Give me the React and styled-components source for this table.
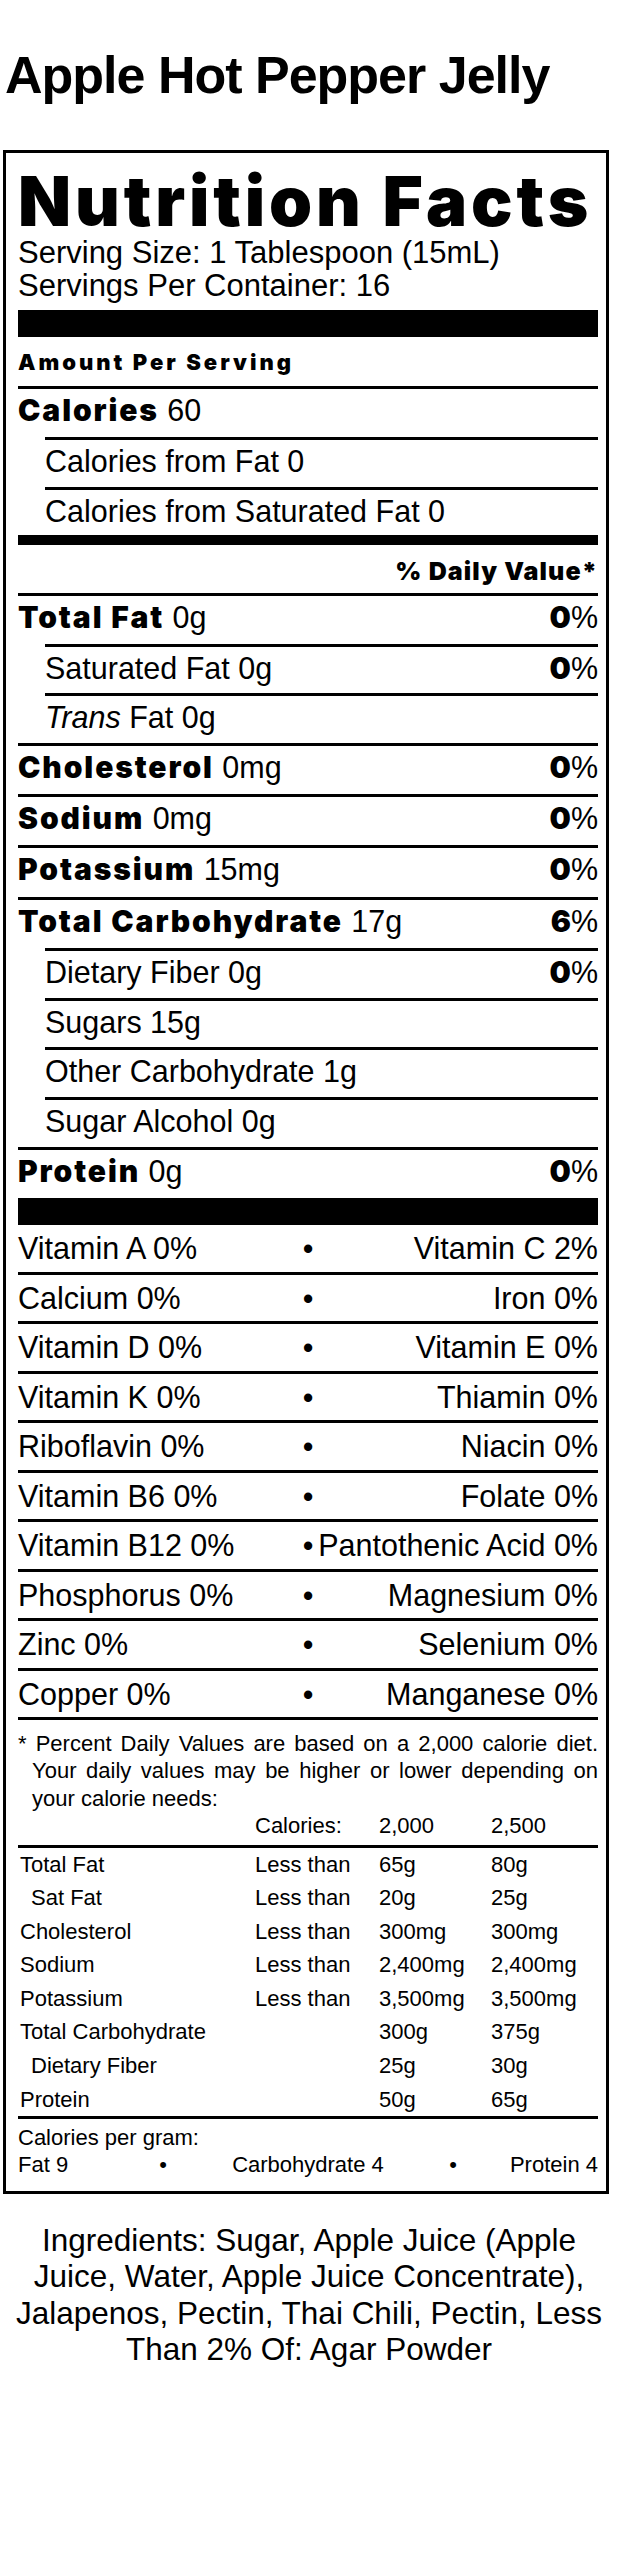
import React from 'react';
import styled, { createGlobalStyle } from 'styled-components';

const Global = createGlobalStyle`
  html, body { margin: 0; padding: 0; background: #fff; }
  body {
    font-family: "Liberation Sans", Arial, Helvetica, sans-serif;
    color: #000;
  }
`;

const heavy = `
  font-family: Inter, Roboto, "Liberation Sans", sans-serif;
  font-weight: 900;
`;

const Page = styled.div`
  width: 618px;
  min-height: 2560px;
  padding-top: 45px;
  box-sizing: border-box;
`;

const Title = styled.h1`
  margin: 0 0 0 5px;
  font-size: 52px;
  font-weight: 700;
  letter-spacing: -1px;
  line-height: 60px;
  white-space: nowrap;
`;

const Label = styled.section`
  box-sizing: border-box;
  width: 606px;
  margin: 45px 0 0 3px;
  border: 3px solid #000;
  padding: 0 8px 13px 12px;
`;

const Heading = styled.h2`
  ${heavy}
  margin: 15px 0 0;
  font-size: 69px;
  line-height: 67px;
  letter-spacing: 3.9px;
  white-space: nowrap;
`;

const Serving = styled.div`
  margin-top: 1px;
  font-size: 31px;
  line-height: 33px;
  white-space: nowrap;
`;

const Bar = styled.div`
  height: 27px;
  background: #000;
  margin-top: ${p => p.$mt || 0}px;
`;

const Amount = styled.div`
  ${heavy}
  font-size: 22px;
  letter-spacing: 3px;
  height: 47px;
  line-height: 47px;
  padding-top: 2px;
  white-space: nowrap;
`;

const Row = styled.div`
  display: flex;
  align-items: baseline;
  justify-content: space-between;
  border-top: 3px solid #000;
  margin-left: ${p => (p.$indent ? 27 : 0)}px;
  height: ${p => p.$h || 47.5}px;
  font-size: 30.5px;
  line-height: 43px;
  white-space: nowrap;
`;

const DVRow = styled.div`
  ${heavy}
  display: flex;
  justify-content: flex-end;
  border-top: 10px solid #000;
  height: 43px;
  padding-top: 5px;
  font-size: 25px;
  letter-spacing: 1.1px;
  line-height: 43px;
  white-space: nowrap;
`;

const Name = styled.span`
  ${heavy}
  font-size: 30px;
  letter-spacing: 1.9px;
`;

const Pct = styled.span`
  white-space: nowrap;
`;

const PctNum = styled.span`
  ${heavy}
  font-size: 30px;
`;

const Ital = styled.i`
  font-style: italic;
`;

const VitRow = styled.div`
  display: grid;
  grid-template-columns: 1fr auto 1fr;
  align-items: baseline;
  border-bottom: 3px solid #000;
  height: 46.5px;
  font-size: 30.5px;
  line-height: 46.5px;
  white-space: nowrap;
`;

const Right = styled.span`
  text-align: right;
`;

const Dot = styled.span`
  text-align: center;
`;

const Footnote = styled.p`
  margin: 9.5px 0 0;
  padding-left: 14px;
  text-indent: -14px;
  font-size: 22px;
  line-height: 27.5px;
  text-align: justify;
`;

const DVTable = styled.div`
  display: grid;
  grid-template-columns: 237px 124px 112px 1fr;
  font-size: 22px;
  white-space: nowrap;
`;

const HeadCell = styled.div`
  line-height: 27.5px;
  padding-bottom: 5px;
  border-bottom: 3px solid #000;
`;

const Cell = styled.div`
  line-height: 33.6px;
  padding-left: ${p => (p.$pad || 0)}px;
  ${p => (p.$last ? 'border-bottom: 3px solid #000;' : '')}
`;

const PerGram = styled.div`
  margin-top: 5px;
  font-size: 22px;
  line-height: 27px;
`;

const PerGramRow = styled.div`
  display: grid;
  grid-template-columns: 1fr auto 2fr auto 1fr;
  white-space: nowrap;
`;

const Ingredients = styled.p`
  margin: 27.5px 0 0;
  padding: 0 6px;
  font-size: 31.5px;
  line-height: 36.4px;
  text-align: center;
`;

const nutrients = [
  { name: 'Total Fat', val: '0g', pct: '0', bold: true, h: 47.5 },
  { name: 'Saturated Fat 0g', pct: '0', indent: true, h: 46.5 },
  { trans: true, indent: true, h: 47 },
  { name: 'Cholesterol', val: '0mg', pct: '0', bold: true, h: 48 },
  { name: 'Sodium', val: '0mg', pct: '0', bold: true, h: 48 },
  { name: 'Potassium', val: '15mg', pct: '0', bold: true, h: 49 },
  { name: 'Total Carbohydrate', val: '17g', pct: '6', bold: true, h: 48 },
  { name: 'Dietary Fiber 0g', pct: '0', indent: true, h: 47 },
  { name: 'Sugars 15g', indent: true, h: 46 },
  { name: 'Other Carbohydrate 1g', indent: true, h: 47 },
  { name: 'Sugar Alcohol 0g', indent: true, h: 47 },
  { name: 'Protein', val: '0g', pct: '0', bold: true, h: 48 },
];

const vitamins = [
  ['Vitamin A 0%', 'Vitamin C 2%'],
  ['Calcium 0%', 'Iron 0%'],
  ['Vitamin D 0%', 'Vitamin E 0%'],
  ['Vitamin K 0%', 'Thiamin 0%'],
  ['Riboflavin 0%', 'Niacin 0%'],
  ['Vitamin B6 0%', 'Folate 0%'],
  ['Vitamin B12 0%', 'Pantothenic Acid 0%'],
  ['Phosphorus 0%', 'Magnesium 0%'],
  ['Zinc 0%', 'Selenium 0%'],
  ['Copper 0%', 'Manganese 0%'],
];

const dvRows = [
  ['Total Fat', 'Less than', '65g', '80g', 2],
  ['Sat Fat', 'Less than', '20g', '25g', 13],
  ['Cholesterol', 'Less than', '300mg', '300mg', 2],
  ['Sodium', 'Less than', '2,400mg', '2,400mg', 2],
  ['Potassium', 'Less than', '3,500mg', '3,500mg', 2],
  ['Total Carbohydrate', '', '300g', '375g', 2],
  ['Dietary Fiber', '', '25g', '30g', 13],
  ['Protein', '', '50g', '65g', 2],
];

export default function App() {
  return (
    <Page>
      <Global />
      <Title>Apple Hot Pepper Jelly</Title>
      <Label>
        <Heading>Nutrition Facts</Heading>
        <Serving>
          Serving Size: 1 Tablespoon (15mL)
          <br />
          Servings Per Container: 16
        </Serving>
        <Bar $mt={8} />
        <Amount>Amount Per Serving</Amount>
        <Row $h={48}>
          <span>
            <Name>Calories</Name> 60
          </span>
        </Row>
        <Row $indent $h={47}>
          <span>Calories from Fat 0</span>
        </Row>
        <Row $indent $h={45}>
          <span>Calories from Saturated Fat 0</span>
        </Row>
        <DVRow>% Daily Value*</DVRow>
        {nutrients.map((n, i) => (
          <Row key={i} $indent={n.indent} $h={n.h}>
            {n.trans ? (
              <span>
                <Ital>Trans</Ital> Fat 0g
              </span>
            ) : n.bold ? (
              <span>
                <Name>{n.name}</Name> {n.val}
              </span>
            ) : (
              <span>{n.name}</span>
            )}
            {n.pct && (
              <Pct>
                <PctNum>{n.pct}</PctNum>%
              </Pct>
            )}
          </Row>
        ))}
        <Bar />
        {vitamins.map(([l, r], i) => (
          <VitRow key={i}>
            <span>{l}</span>
            <Dot>•</Dot>
            <Right>{r}</Right>
          </VitRow>
        ))}
        <Footnote>
          * Percent Daily Values are based on a 2,000 calorie diet. Your daily values may be higher or lower depending on your calorie needs:
        </Footnote>
        <DVTable>
          <HeadCell />
          <HeadCell>Calories:</HeadCell>
          <HeadCell>2,000</HeadCell>
          <HeadCell>2,500</HeadCell>
          {dvRows.map((r, i) => {
            const last = i === dvRows.length - 1;
            return (
              <React.Fragment key={i}>
                <Cell $pad={r[4]} $last={last}>{r[0]}</Cell>
                <Cell $last={last}>{r[1]}</Cell>
                <Cell $last={last}>{r[2]}</Cell>
                <Cell $last={last}>{r[3]}</Cell>
              </React.Fragment>
            );
          })}
        </DVTable>
        <PerGram>
          <div>Calories per gram:</div>
          <PerGramRow>
            <span>Fat 9</span>
            <Dot>•</Dot>
            <Dot>Carbohydrate 4</Dot>
            <Dot>•</Dot>
            <Right>Protein 4</Right>
          </PerGramRow>
        </PerGram>
      </Label>
      <Ingredients>
        Ingredients: Sugar, Apple Juice (Apple Juice, Water, Apple Juice Concentrate), Jalapenos, Pectin, Thai Chili, Pectin, Less Than 2% Of: Agar Powder
      </Ingredients>
    </Page>
  );
}
